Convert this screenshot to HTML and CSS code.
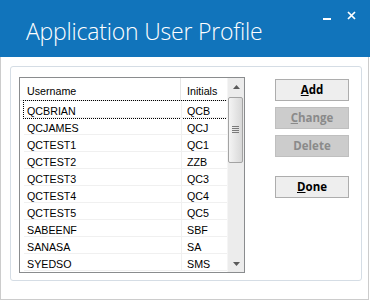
FILE: index.html
```html
<!DOCTYPE html>
<html>
<head>
<meta charset="utf-8">
<link rel="stylesheet" href="styles.css">
</head>
<body>
<div class="titlebar">
  <div class="title">Application User Profile</div>
  <div class="controls">
    <svg class="ctl" width="9" height="9" viewBox="0 0 9 9"><rect x="0" y="7" width="8" height="2" fill="#fff"/></svg>
    <svg class="ctl" width="9" height="9" viewBox="0 0 9 9"><path d="M1 1L8 8M8 1L1 8" stroke="#fff" stroke-width="1.7" fill="none"/></svg>
  </div>
</div>
<div class="client">
  <div class="group">
    <div class="list">
      <div class="cols">
        <div class="header">
          <div class="hcell h-user">Username</div>
          <div class="hcell h-init">Initials</div>
        </div>
        <div class="rows">
          <div class="row focused"><div class="cell c-user">QCBRIAN</div><div class="cell c-init">QCB</div></div>
          <div class="row"><div class="cell c-user">QCJAMES</div><div class="cell c-init">QCJ</div></div>
          <div class="row"><div class="cell c-user">QCTEST1</div><div class="cell c-init">QC1</div></div>
          <div class="row"><div class="cell c-user">QCTEST2</div><div class="cell c-init">ZZB</div></div>
          <div class="row"><div class="cell c-user">QCTEST3</div><div class="cell c-init">QC3</div></div>
          <div class="row"><div class="cell c-user">QCTEST4</div><div class="cell c-init">QC4</div></div>
          <div class="row"><div class="cell c-user">QCTEST5</div><div class="cell c-init">QC5</div></div>
          <div class="row"><div class="cell c-user">SABEENF</div><div class="cell c-init">SBF</div></div>
          <div class="row"><div class="cell c-user">SANASA</div><div class="cell c-init">SA</div></div>
          <div class="row"><div class="cell c-user">SYEDSO</div><div class="cell c-init">SMS</div></div>
        </div>
      </div>
      <div class="scrollbar">
        <div class="sb-btn"><svg width="7" height="4" viewBox="0 0 7 4"><path d="M3.5 0L7 4H0Z" fill="#5a5a5a"/></svg></div>
        <div class="sb-track">
          <div class="thumb">
            <svg width="7" height="8" viewBox="0 0 7 8"><path d="M0 0.5H7M0 2.5H7M0 4.5H7M0 6.5H7" stroke="#7a7a7a" stroke-width="1"/></svg>
          </div>
        </div>
        <div class="sb-btn"><svg width="7" height="4" viewBox="0 0 7 4"><path d="M0 0H7L3.5 4Z" fill="#5a5a5a"/></svg></div>
      </div>
    </div>
    <div class="buttons">
      <div class="btn"><u>A</u>dd</div>
      <div class="btn disabled"><u>C</u>hange</div>
      <div class="btn disabled">Delete</div>
      <div class="btn done"><u>D</u>one</div>
    </div>
  </div>
</div>
</body>
</html>
```
FILE: styles.css
```css
html, body {
  margin: 0;
  padding: 0;
  width: 370px;
  height: 300px;
  overflow: hidden;
  background: #ffffff;
}

.titlebar {
  height: 57px;
  background: #1174bb;
  display: flex;
  align-items: flex-start;
}

.title {
  font-family: "Open Sans", sans-serif;
  font-weight: 300;
  font-size: 23px;
  letter-spacing: -0.2px;
  color: #ffffff;
  padding-left: 26px;
  padding-top: 16px;
  line-height: 31px;
}

.controls {
  margin-left: auto;
  display: flex;
  gap: 15px;
  padding-top: 11px;
  padding-right: 14px;
}

.ctl {
  display: block;
}

.client {
  width: 369px;
  height: 243px;
  box-sizing: border-box;
  border: 1px solid #cccccc;
  border-top: none;
  padding: 9px 0 0 9px;
}

.group {
  width: 352px;
  height: 215px;
  box-sizing: border-box;
  border: 1px solid #d5dde5;
  border-radius: 3px;
  padding: 10px 0 0 8px;
  display: flex;
  align-items: flex-start;
}

.list {
  width: 226px;
  height: 196px;
  box-sizing: border-box;
  border: 1px solid #8a8c8e;
  display: flex;
  font-family: "Liberation Sans", Arial, sans-serif;
  font-size: 10.7px;
  color: #000000;
}

.cols {
  width: 207px;
  display: flex;
  flex-direction: column;
}

.header {
  display: flex;
  height: 23px;
  box-sizing: border-box;
  border-bottom: 1px solid #e5e5e5;
}

.hcell {
  box-sizing: border-box;
  line-height: 26px;
  white-space: nowrap;
}

.h-user {
  width: 161px;
  padding-left: 7px;
  border-right: 1px solid #e5e5e5;
}

.h-init {
  flex: 1;
  padding-left: 6px;
}

.rows {
  padding-left: 4px;
  display: flex;
  flex-direction: column;
}

.row {
  display: flex;
  width: 203px;
  height: 17px;
  box-sizing: border-box;
  border-bottom: 1px solid #f0f0f0;
}

.row.focused {
  outline: 1px dotted #000000;
  outline-offset: 0px;
}

.cell {
  box-sizing: border-box;
  line-height: 14px;
  padding-top: 3px;
  white-space: nowrap;
}

.c-user {
  width: 158px;
  padding-left: 3px;
  border-right: 1px solid #f0f0f0;
}

.c-init {
  flex: 1;
  padding-left: 5px;
}

.scrollbar {
  width: 17px;
  display: flex;
  flex-direction: column;
  background: #ececec;
  border-left: 1px solid #f5f5f5;
  box-sizing: border-box;
}

.sb-btn {
  height: 17px;
  display: flex;
  align-items: center;
  justify-content: center;
}

.sb-btn svg {
  display: block;
}

.sb-track {
  flex: 1;
  padding-top: 2px;
}

.thumb {
  height: 66px;
  margin: 0 1px 0 0;
  box-sizing: border-box;
  border: 1px solid #a3a3a3;
  border-radius: 2px;
  background: linear-gradient(to right, #f4f4f4, #e6e6e6 50%, #d8d8d8);
  display: flex;
  align-items: center;
  justify-content: center;
}

.thumb svg {
  display: block;
}

.buttons {
  margin-left: 30px;
  margin-top: 2px;
  display: flex;
  flex-direction: column;
  gap: 6px;
}

.btn {
  width: 74px;
  height: 22px;
  box-sizing: border-box;
  border: 1px solid #adadad;
  background: #eeeeee;
  font-family: "Open Sans", sans-serif;
  font-weight: 700;
  font-size: 11.5px;
  line-height: 20px;
  text-align: center;
  color: #000000;
}

.btn u {
  text-decoration-thickness: 1px;
}

.btn.disabled {
  background: #cccccc;
  border-color: #bfbfbf;
  color: #8a8a8a;
}

.btn.done {
  margin-top: 13px;
}
```
